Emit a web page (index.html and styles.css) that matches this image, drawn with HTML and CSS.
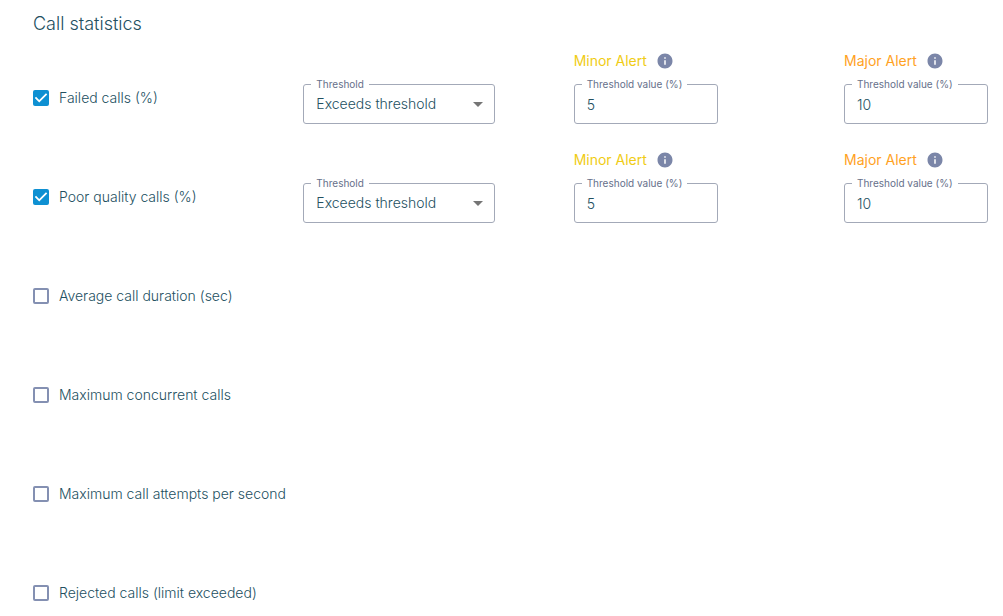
FILE: index.html
```html
<!DOCTYPE html>
<html lang="en">
<head>
<meta charset="utf-8">
<meta name="viewport" content="width=device-width, initial-scale=1">
<title>Call statistics</title>
<link rel="stylesheet" href="styles.css">
</head>
<body>
<svg width="0" height="0" class="sprite" aria-hidden="true">
  <symbol id="info" viewBox="0 0 24 24"><path d="M12 2C6.48 2 2 6.48 2 12s4.480 10 10 10 10-4.480 10-10S17.520 2 12 2zm1 15h-2v-6h2v6zm0-8h-2V7h2v2z"/></symbol>
  <symbol id="caret" viewBox="0 0 10 5"><path d="M0 0h10L5 5z"/></symbol>
</svg>
<main class="page">
  <h1 class="title">Call statistics</h1>
  <form class="rows">
    <div class="row">
      <label class="check"><input type="checkbox" class="box" checked>Failed calls (%)</label>
      <fieldset class="field field-select">
        <legend><label for="failed-mode">Threshold</label></legend>
        <select id="failed-mode" class="control"><option>Exceeds threshold</option><option>Below threshold</option></select>
        <svg class="caret" aria-hidden="true"><use href="#caret"/></svg>
      </fieldset>
      <div class="alert">
        <div class="alert-name minor">Minor Alert <svg class="info" aria-hidden="true"><use href="#info"/></svg></div>
        <fieldset class="field">
          <legend><label for="failed-minor">Threshold value (%)</label></legend>
          <input id="failed-minor" class="control" type="text" inputmode="numeric" value="5">
        </fieldset>
      </div>
      <div class="alert">
        <div class="alert-name major">Major Alert <svg class="info" aria-hidden="true"><use href="#info"/></svg></div>
        <fieldset class="field">
          <legend><label for="failed-major">Threshold value (%)</label></legend>
          <input id="failed-major" class="control" type="text" inputmode="numeric" value="10">
        </fieldset>
      </div>
    </div>
    <div class="row">
      <label class="check"><input type="checkbox" class="box" checked>Poor quality calls (%)</label>
      <fieldset class="field field-select">
        <legend><label for="poor-mode">Threshold</label></legend>
        <select id="poor-mode" class="control"><option>Exceeds threshold</option><option>Below threshold</option></select>
        <svg class="caret" aria-hidden="true"><use href="#caret"/></svg>
      </fieldset>
      <div class="alert">
        <div class="alert-name minor">Minor Alert <svg class="info" aria-hidden="true"><use href="#info"/></svg></div>
        <fieldset class="field">
          <legend><label for="poor-minor">Threshold value (%)</label></legend>
          <input id="poor-minor" class="control" type="text" inputmode="numeric" value="5">
        </fieldset>
      </div>
      <div class="alert">
        <div class="alert-name major">Major Alert <svg class="info" aria-hidden="true"><use href="#info"/></svg></div>
        <fieldset class="field">
          <legend><label for="poor-major">Threshold value (%)</label></legend>
          <input id="poor-major" class="control" type="text" inputmode="numeric" value="10">
        </fieldset>
      </div>
    </div>
    <div class="row"><label class="check"><input type="checkbox" class="box">Average call duration (sec)</label></div>
    <div class="row"><label class="check"><input type="checkbox" class="box">Maximum concurrent calls</label></div>
    <div class="row"><label class="check"><input type="checkbox" class="box">Maximum call attempts per second</label></div>
    <div class="row"><label class="check"><input type="checkbox" class="box">Rejected calls (limit exceeded)</label></div>
  </form>
</main>
</body>
</html>
```
FILE: styles.css
```css
* {
  box-sizing: border-box;
}

body {
  margin: 0;
  background: #fff;
  color: #23505f;
  font: 300 14px/20px Inter, "Liberation Sans", sans-serif;
}

.sprite {
  position: absolute;
}

.page {
  padding: 12px 15px 0 33px;
}

.title {
  margin: 0 0 13px;
  font-size: 18px;
  font-weight: 300;
  line-height: 24px;
}

.row {
  display: grid;
  grid-template-columns: repeat(3, 1fr) 144px;
  align-items: end;
  min-height: 99px;
  padding-bottom: 24px;
}

.check {
  display: flex;
  align-items: center;
  gap: 10px;
  margin-bottom: 16px;
  white-space: nowrap;
}

.box {
  appearance: none;
  flex: none;
  width: 16px;
  height: 16px;
  margin: 0;
  border: 2px solid #8490b2;
  border-radius: 2px;
}

.box:checked {
  display: grid;
  border: 0;
  background: #0e90d2;
}

.box:checked::after {
  content: "";
  background: #fff;
  clip-path: polygon(39% 78%, 11% 50%, 19% 42%, 39% 62%, 81% 20%, 89% 28%);
}

.field {
  position: relative;
  width: 144px;
  min-width: 0;
  margin: 0;
  padding: 0 0 6px;
  border: 1px solid #a3a9b8;
  border-radius: 3px;
}

.field-select {
  width: 192px;
}

.field legend {
  margin-left: 7px;
  padding: 0 5px;
  color: #66708a;
  font-size: 10px;
  font-weight: 400;
  line-height: 13px;
}

.field legend label {
  display: block;
}

.control {
  appearance: none;
  display: block;
  width: 100%;
  height: 26px;
  margin: 0;
  padding: 0 12px;
  border: 0;
  outline: 0;
  background: transparent;
  color: #23505f;
  font: inherit;
}

.caret {
  position: absolute;
  right: 11px;
  top: 11px;
  width: 10px;
  height: 5px;
  fill: #757575;
  pointer-events: none;
}

.alert-name {
  display: flex;
  align-items: center;
  gap: 9px;
  margin-bottom: 7px;
  font-weight: 400;
}

.minor {
  color: #f0cc15;
}

.major {
  color: #ffa21f;
}

.info {
  width: 18px;
  height: 18px;
  fill: #7b86a8;
}
```
